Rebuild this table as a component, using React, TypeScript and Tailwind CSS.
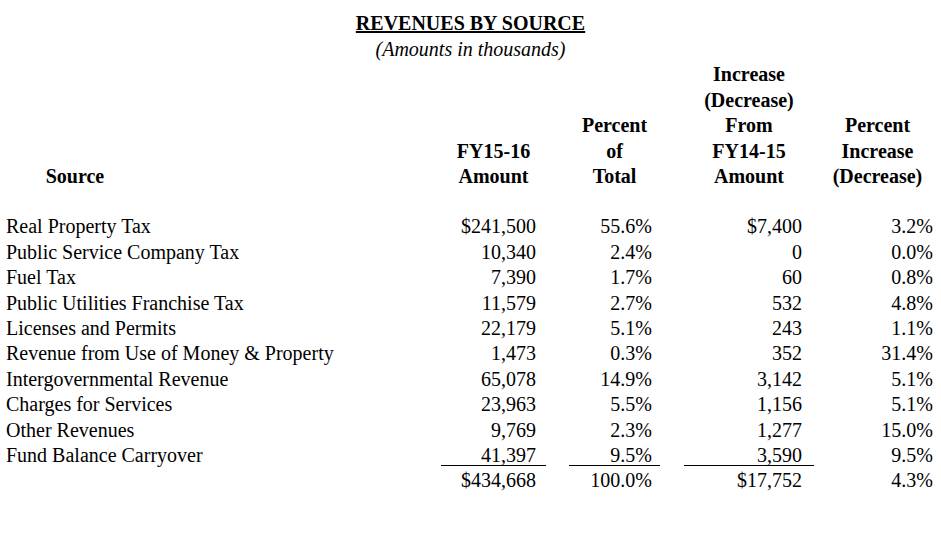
const rows: [string, string, string, string, string][] = [
    ["Real Property Tax", "$241,500", "55.6%", "$7,400", "3.2%"],
    ["Public Service Company Tax", "10,340", "2.4%", "0", "0.0%"],
    ["Fuel Tax", "7,390", "1.7%", "60", "0.8%"],
    ["Public Utilities Franchise Tax", "11,579", "2.7%", "532", "4.8%"],
    ["Licenses and Permits", "22,179", "5.1%", "243", "1.1%"],
    ["Revenue from Use of Money & Property", "1,473", "0.3%", "352", "31.4%"],
    ["Intergovernmental Revenue", "65,078", "14.9%", "3,142", "5.1%"],
    ["Charges for Services", "23,963", "5.5%", "1,156", "5.1%"],
    ["Other Revenues", "9,769", "2.3%", "1,277", "15.0%"],
    ["Fund Balance Carryover", "41,397", "9.5%", "3,590", "9.5%"],
];

const Row = ({ cells, underline }: { cells: string[]; underline?: boolean }) => {
    const rule = underline ? "border-b border-black leading-[19px]" : "";

    return (
        <div className="flex h-[25.4px] items-center">
            <div className="w-[441px] pl-[6px]">{cells[0]}</div>
            <div className={`w-[105px] pr-[10px] text-right ${rule}`}>{cells[1]}</div>
            <div className={`ml-[23px] w-[91px] pr-[8px] text-right ${rule}`}>{cells[2]}</div>
            <div className={`ml-[24px] w-[130px] pr-[12px] text-right ${rule}`}>{cells[3]}</div>
            <div className="w-[127px] pr-[8px] text-right">{cells[4]}</div>
        </div>
    );
};

export default function App() {
    const total = ["", "$434,668", "100.0%", "$17,752", "4.3%"];

    return (
        <div className="h-[546px] w-[941px] overflow-hidden bg-white pt-[11px] font-['Liberation_Serif',serif] text-[20px] leading-[25.5px] text-black">
            <div className="text-center font-bold underline decoration-2 underline-offset-1">REVENUES BY SOURCE</div>
            <div className="text-center italic">(Amounts in thousands)</div>

            <div className="flex items-end font-bold leading-[25.6px]">
                <div className="w-[441px]">
                    <div className="w-[150px] text-center">Source</div>
                </div>
                <div className="w-[105px] text-center">
                    FY15-16
                    <br />
                    Amount
                </div>
                <div className="ml-[23px] w-[91px] text-center">
                    Percent
                    <br />
                    of
                    <br />
                    Total
                </div>
                <div className="ml-[24px] w-[130px] text-center">
                    Increase
                    <br />
                    (Decrease)
                    <br />
                    From
                    <br />
                    FY14-15
                    <br />
                    Amount
                </div>
                <div className="w-[127px] text-center">
                    Percent
                    <br />
                    Increase
                    <br />
                    (Decrease)
                </div>
            </div>

            <div className="mt-[24.5px]">
                {rows.map((r, i) => (
                    <Row key={r[0]} cells={r} underline={i === rows.length - 1} />
                ))}
                <Row cells={total} />
            </div>
        </div>
    );
}
